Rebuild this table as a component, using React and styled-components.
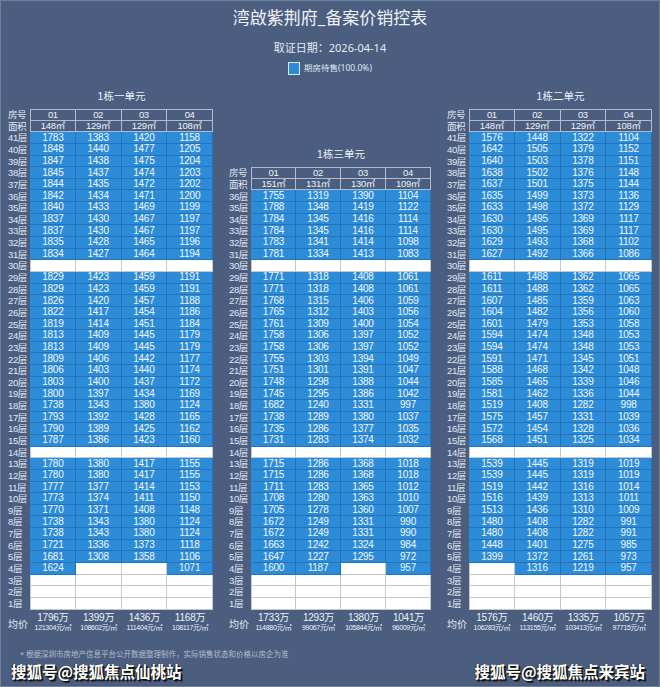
import React from 'react'
import styled, { createGlobalStyle } from 'styled-components'

const GlobalStyle = createGlobalStyle`
	body {
		margin: 0;
		background: #4b5e80;
		font-family: 'Noto Sans', 'Noto Sans CJK SC', sans-serif;
	}
`

const FONT = `'Noto Sans', 'Noto Sans CJK SC', sans-serif`
const TABLE_FONT = `'Liberation Sans', 'Noto Sans CJK SC', sans-serif`

const Page = styled.div`
	width: 660px;
	height: 687px;
	box-sizing: border-box;
	padding-top: 6px;
	background: #4b5e80;
	border: 1px solid #6f809c;
	overflow: hidden;
	color: #e8edf5;
	font-family: ${FONT};
`

const Title = styled.h1`
	margin: 0;
	font-size: 17px;
	font-weight: 400;
	line-height: 22px;
	text-align: center;
	color: #eef2f8;
`

const DateLine = styled.div`
	margin-top: 11px;
	font-size: 11px;
	line-height: 16px;
	text-align: center;
	color: #e6ebf3;
`

const Legend = styled.div`
	margin-top: 5px;
	display: flex;
	justify-content: center;
	align-items: center;
	gap: 4px;
	height: 14px;
	font-size: 8.5px;
	line-height: 1;
	color: #dfe6f0;
`

const Swatch = styled.span`
	width: 10px;
	height: 11px;
	background: #2d8cd8;
	border: 1px solid #dbe5f3;
`

const Tables = styled.div`
	margin-top: 13px;
	padding: 0 7px;
	display: flex;
	justify-content: space-between;
	align-items: flex-end;
	font-family: ${TABLE_FONT};
`

const Block = styled.section`
	width: ${(p) => p.$width}px;
`

const Caption = styled.div`
	padding-left: 22px;
	font-size: 10.5px;
	line-height: 16px;
	margin-bottom: 5px;
	text-align: center;
	color: #eef2f8;
`

const Grid = styled.div`
	display: grid;
	grid-template-columns: 22px repeat(4, 1fr);
	grid-auto-rows: 11.65px;
	line-height: 1;
`

const Label = styled.div`
	display: flex;
	align-items: center;
	font-size: 9.5px;
	line-height: 1;
	letter-spacing: -0.4px;
	white-space: nowrap;
	color: #e3e8f0;
`

const HeadCell = styled.div`
	display: flex;
	align-items: center;
	justify-content: center;
	box-sizing: border-box;
	border-right: 1px solid #b1bccd;
	border-bottom: 1px solid #b1bccd;
	border-top: ${(p) => (p.$top ? '1px solid #b1bccd' : 'none')};
	border-left: ${(p) => (p.$first ? '1px solid #b1bccd' : 'none')};
	font-size: 9.5px;
	line-height: 1;
	letter-spacing: -0.3px;
	color: #eef2f8;
`

const Cell = styled.div`
	display: flex;
	align-items: center;
	justify-content: center;
	box-sizing: border-box;
	background: ${(p) => (p.$empty ? '#ffffff' : '#2d8cd8')};
	border-right: 1px solid ${(p) => (p.$empty ? '#c4c8ce' : '#2272bc')};
	border-bottom: 1px solid ${(p) => (p.$empty ? '#c4c8ce' : '#2272bc')};
	border-left: ${(p) => (p.$first ? `1px solid ${p.$empty ? '#c4c8ce' : '#2d8cd8'}` : 'none')};
	font-size: 10px;
	line-height: 1;
	letter-spacing: -0.2px;
	color: #f1f7ff;
`

const AvgRow = styled.div`
	margin-top: 2px;
	display: grid;
	grid-template-columns: 22px repeat(4, 1fr);
	height: 21px;
`

const AvgLabel = styled.div`
	display: flex;
	align-items: center;
	padding-top: 5px;
	font-size: 10px;
	line-height: 1;
	color: #e3e8f0;
`

const AvgCell = styled.div`
	display: flex;
	flex-direction: column;
	align-items: center;
	color: #eef2f8;
`

const AvgTotal = styled.span`
	font-size: 10px;
	line-height: 11.5px;
	letter-spacing: -0.2px;
`

const AvgUnit = styled.span`
	font-size: 7px;
	line-height: 9px;
	letter-spacing: -0.3px;
	white-space: nowrap;
`

const Note = styled.div`
	margin-top: 16px;
	padding-left: 19px;
	font-size: 7.5px;
	line-height: 10px;
	color: #b3bdcc;
`

const Marks = styled.div`
	margin-top: 3px;
	padding: 0 14px 0 10px;
	display: flex;
	justify-content: space-between;
`

const Mark = styled.span`
	font-size: 15.5px;
	font-weight: 700;
	line-height: 18px;
	color: #ffffff;
	font-family: 'Noto Sans CJK SC', sans-serif;
	text-shadow: 1px 1px 0 #111, 2px 2px 0 #222, -1px 0 0 #333;
`

const parse = (text) =>
	text
		.trim()
		.split('\n')
		.map((line) => line.trim().split(' '))

const buildings = [
	{
		name: '1栋一单元',
		width: 205,
		top: 41,
		areas: ['148㎡', '129㎡', '129㎡', '108㎡'],
		avg: [
			['1796万', '121304元/㎡'],
			['1399万', '108602元/㎡'],
			['1436万', '111404元/㎡'],
			['1168万', '108117元/㎡']
		],
		rows: parse(`
			1783 1383 1420 1158
			1848 1440 1477 1205
			1847 1438 1475 1204
			1845 1437 1474 1203
			1844 1435 1472 1202
			1842 1434 1471 1200
			1840 1433 1469 1199
			1837 1430 1467 1197
			1837 1430 1467 1197
			1835 1428 1465 1196
			1834 1427 1464 1194
			- - - -
			1829 1423 1459 1191
			1829 1423 1459 1191
			1826 1420 1457 1188
			1822 1417 1454 1186
			1819 1414 1451 1184
			1813 1409 1445 1179
			1813 1409 1445 1179
			1809 1406 1442 1177
			1806 1403 1440 1174
			1803 1400 1437 1172
			1800 1397 1434 1169
			1738 1343 1380 1124
			1793 1392 1428 1165
			1790 1389 1425 1162
			1787 1386 1423 1160
			- - - -
			1780 1380 1417 1155
			1780 1380 1417 1155
			1777 1377 1414 1153
			1773 1374 1411 1150
			1770 1371 1408 1148
			1738 1343 1380 1124
			1738 1343 1380 1124
			1721 1336 1373 1118
			1681 1308 1358 1106
			1624 - - 1071
			- - - -
			- - - -
			- - - -
		`)
	},
	{
		name: '1栋三单元',
		width: 202,
		top: 36,
		areas: ['151㎡', '131㎡', '130㎡', '109㎡'],
		avg: [
			['1733万', '114880元/㎡'],
			['1293万', '99067元/㎡'],
			['1380万', '105844元/㎡'],
			['1041万', '96009元/㎡']
		],
		rows: parse(`
			1755 1319 1390 1104
			1788 1348 1419 1122
			1784 1345 1416 1114
			1784 1345 1416 1114
			1783 1341 1414 1098
			1781 1334 1413 1083
			- - - -
			1771 1318 1408 1061
			1771 1318 1408 1061
			1768 1315 1406 1059
			1765 1312 1403 1056
			1761 1309 1400 1054
			1758 1306 1397 1052
			1758 1306 1397 1052
			1755 1303 1394 1049
			1751 1301 1391 1047
			1748 1298 1388 1044
			1745 1295 1386 1042
			1682 1240 1331 997
			1738 1289 1380 1037
			1735 1286 1377 1035
			1731 1283 1374 1032
			- - - -
			1715 1286 1368 1018
			1715 1286 1368 1018
			1711 1283 1365 1012
			1708 1280 1363 1010
			1705 1278 1360 1007
			1672 1249 1331 990
			1672 1249 1331 990
			1663 1242 1324 984
			1647 1227 1295 972
			1600 1187 - 957
			- - - -
			- - - -
			- - - -
		`)
	},
	{
		name: '1栋二单元',
		width: 205,
		top: 41,
		areas: ['148㎡', '129㎡', '129㎡', '108㎡'],
		avg: [
			['1576万', '106283元/㎡'],
			['1460万', '113155元/㎡'],
			['1335万', '103413元/㎡'],
			['1057万', '97715元/㎡']
		],
		rows: parse(`
			1576 1448 1322 1104
			1642 1505 1379 1152
			1640 1503 1378 1151
			1638 1502 1376 1148
			1637 1501 1375 1144
			1635 1499 1373 1136
			1633 1498 1372 1129
			1630 1495 1369 1117
			1630 1495 1369 1117
			1629 1493 1368 1102
			1627 1492 1366 1086
			- - - -
			1611 1488 1362 1065
			1611 1488 1362 1065
			1607 1485 1359 1063
			1604 1482 1356 1060
			1601 1479 1353 1058
			1594 1474 1348 1053
			1594 1474 1348 1053
			1591 1471 1345 1051
			1588 1468 1342 1048
			1585 1465 1339 1046
			1581 1462 1336 1044
			1519 1408 1282 998
			1575 1457 1331 1039
			1572 1454 1328 1036
			1568 1451 1325 1034
			- - - -
			1539 1445 1319 1019
			1539 1445 1319 1019
			1519 1442 1316 1014
			1516 1439 1313 1011
			1513 1436 1310 1009
			1480 1408 1282 991
			1480 1408 1282 991
			1448 1401 1275 985
			1399 1372 1261 973
			- 1316 1219 957
			- - - -
			- - - -
			- - - -
		`)
	}
]

function Building({ data }) {
	return (
		<Block $width={data.width}>
			<Caption>{data.name}</Caption>
			<Grid>
				<Label>房号</Label>
				{['01', '02', '03', '04'].map((n, i) => (
					<HeadCell key={n} $top $first={i === 0}>
						{n}
					</HeadCell>
				))}
				<Label>面积</Label>
				{data.areas.map((a, i) => (
					<HeadCell key={i} $first={i === 0}>
						{a}
					</HeadCell>
				))}
				{data.rows.map((cells, r) => (
					<React.Fragment key={r}>
						<Label>{data.top - r}层</Label>
						{cells.map((v, c) => (
							<Cell key={c} $empty={v === '-'} $first={c === 0}>
								{v === '-' ? '' : v}
							</Cell>
						))}
					</React.Fragment>
				))}
			</Grid>
			<AvgRow>
				<AvgLabel>均价</AvgLabel>
				{data.avg.map(([total, unit], i) => (
					<AvgCell key={i}>
						<AvgTotal>{total}</AvgTotal>
						<AvgUnit>{unit}</AvgUnit>
					</AvgCell>
				))}
			</AvgRow>
		</Block>
	)
}

export default function App() {
	return (
		<React.Fragment>
			<GlobalStyle />
			<Page>
				<Title>湾啟紫荆府_备案价销控表</Title>
				<DateLine>取证日期：2026-04-14</DateLine>
				<Legend>
					<Swatch />
					<span>期房待售(100.0%)</span>
				</Legend>
				<Tables>
					{buildings.map((b) => (
						<Building key={b.name} data={b} />
					))}
				</Tables>
				<Note>* 根据深圳市房地产信息平台公开数据整理制作，实际销售状态和价格以房企为准</Note>
				<Marks>
					<Mark>搜狐号@搜狐焦点仙桃站</Mark>
					<Mark>搜狐号@搜狐焦点来宾站</Mark>
				</Marks>
			</Page>
		</React.Fragment>
	)
}
